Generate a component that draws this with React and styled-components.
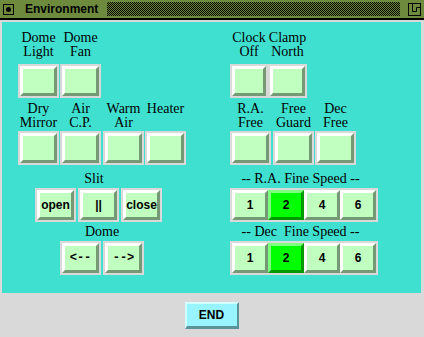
import React from 'react';
import styled, { createGlobalStyle } from 'styled-components';

const GlobalStyle = createGlobalStyle`
  html, body {
    margin: 0;
    padding: 0;
    background: #d9d9d9;
  }
  body {
    width: 424px;
    height: 337px;
    overflow: hidden;
  }
`;

const Window = styled.div`
  width: 424px;
  height: 337px;
  display: flex;
  flex-direction: column;
  background: #d9d9d9;
`;

const TitleBar = styled.div`
  height: 18px;
  background: #6e8b3d;
  border-bottom: 2px solid #000;
  display: flex;
  align-items: center;
  padding: 0 3px;
`;

const MenuBox = styled.div`
  box-sizing: border-box;
  width: 11px;
  height: 11px;
  border: 1px solid #000;
  display: flex;
  align-items: center;
  justify-content: center;
  &::after {
    content: '';
    width: 5px;
    height: 5px;
    border-radius: 50%;
    background: #000;
  }
`;

const TitleText = styled.div`
  width: 82px;
  margin-left: 11px;
  font: bold 12px "Liberation Sans", Arial, sans-serif;
  color: #000;
`;

const Hatch = styled.div`
  flex: 1;
  height: 14px;
  margin-right: 8px;
  background: repeating-conic-gradient(#000 0 25%, transparent 0 50%) 0 0 / 2px 2px;
`;

const Body = styled.div`
  flex: 1;
  display: flex;
  flex-direction: column;
  padding: 2px 3px 0 2px;
`;

const Panel = styled.div`
  height: 271px;
  box-sizing: border-box;
  background: #40e0d0;
  padding: 9px 0 0 16px;
  display: flex;
  flex-direction: column;
`;

const Band = styled.div`
  display: grid;
  grid-template-columns: 212px 1fr;
  align-items: start;
  justify-items: start;
  margin-top: ${p => p.$top || 0}px;
`;

const Row = styled.div`
  display: flex;
  align-items: flex-start;
  gap: ${p => p.$gap || 0}px;
  margin-left: ${p => p.$left || 0}px;
`;

const Cell = styled.div`
  display: flex;
  flex-direction: column;
  align-items: ${p => p.$align || 'center'};
  gap: ${p => p.$gap || 0}px;
  margin-left: ${p => p.$left || 0}px;
`;

const Label = styled.div`
  font: 14px/14px "Liberation Serif", "Times New Roman", serif;
  color: #000;
  text-align: center;
  white-space: pre;
  height: ${p => (p.$lines || 1) * 14}px;
  margin-right: ${p => p.$nudge || 0}px;
`;

const Frame = styled.div`
  display: flex;
  padding: 2px;
  background: #d9d9d9;
`;

const Btn = styled.div`
  box-sizing: border-box;
  width: ${p => p.$w}px;
  height: ${p => p.$h || 30}px;
  border: 3px solid;
  border-color: ${p => p.$on
    ? '#7fff7f #009900 #009900 #7fff7f'
    : '#ffffff #749974 #749974 #ffffff'};
  background: ${p => p.$on ? '#00ff00' : '#c1ffc1'};
  display: flex;
  align-items: center;
  justify-content: center;
  font: bold 12px "Liberation Sans", Arial, sans-serif;
  color: #000;
`;

const Mono = styled.span`
  font: bold 12px "Liberation Mono", "Courier New", monospace;
  white-space: pre;
`;

const Footer = styled.div`
  flex: 1;
  display: flex;
  justify-content: center;
  padding-top: 9px;
`;

const EndBtn = styled.div`
  box-sizing: border-box;
  width: 54px;
  height: 27px;
  border: 2px solid;
  border-color: #d4ffff #5b9399 #5b9399 #d4ffff;
  border-bottom-width: 3px;
  background: #98f5ff;
  display: flex;
  align-items: center;
  justify-content: center;
  font: bold 12px "Liberation Sans", Arial, sans-serif;
  color: #000;
`;

const Toggle = ({ label, w = 41, gap, left }) => (
  <Cell $gap={gap} $left={left} style={{ width: w }}>
    <Label $lines={2}>{label}</Label>
    <Frame>
      <Btn $w={w - 4} />
    </Frame>
  </Cell>
);

const Push = ({ children, w = 41 }) => (
  <Frame>
    <Btn $w={w - 4}>{children}</Btn>
  </Frame>
);

const Speed = ({ title, value, nudge }) => (
  <Cell $gap={2} $align="flex-start">
    <Label $nudge={nudge} style={{ width: 148 - nudge }}>{title}</Label>
    <Frame>
      {[1, 2, 4, 6].map(n => (
        <Btn key={n} $w={36} $on={n === value}>{n}</Btn>
      ))}
    </Frame>
  </Cell>
);

const ResizeIcon = () => (
  <svg width="13" height="13" viewBox="0 0 13 13">
    <rect x="0.5" y="0.5" width="12" height="12" fill="none" stroke="#000" />
    <path d="M4.5 1 V8.5 H8.5 V4.5 H12" fill="none" stroke="#000" />
  </svg>
);

export default function App() {
  return (
    <Window>
      <GlobalStyle />
      <TitleBar>
        <MenuBox />
        <TitleText>Environment</TitleText>
        <Hatch />
        <ResizeIcon />
      </TitleBar>
      <Body>
        <Panel>
          <Band>
            <Row $gap={1}>
              <Toggle label={'Dome\nLight'} gap={5} />
              <Toggle label={'Dome\nFan'} gap={5} />
            </Row>
            <Row>
              <Toggle label={'Clock\nOff'} w={38} gap={5} />
              <Toggle label={'Clamp\nNorth'} w={39} gap={5} />
            </Row>
          </Band>

          <Band $top={4}>
            <Row>
              <Toggle label={'Dry\nMirror'} gap={1} />
              <Toggle label={'Air\nC.P.'} left={1} gap={1} />
              <Toggle label={'Warm\nAir'} left={2} gap={1} />
              <Toggle label={'Heater'} left={1} gap={1} />
            </Row>
            <Row>
              <Toggle label={'R.A.\nFree'} gap={1} />
              <Toggle label={'Free\nGuard'} left={2} gap={1} />
              <Toggle label={'Dec\nFree'} left={1} gap={1} />
            </Row>
          </Band>

          <Band $top={7}>
            <Cell $gap={2} $left={17}>
              <Label $nudge={9}>Slit</Label>
              <Row $gap={2}>
                <Push>open</Push>
                <Push>||</Push>
                <Push>close</Push>
              </Row>
            </Cell>
            <Speed title="-- R.A. Fine Speed --" value={2} nudge={7} />
          </Band>

          <Band $top={3}>
            <Cell $gap={2} $left={42}>
              <Label>Dome</Label>
              <Row $gap={2}>
                <Push><Mono>{'<--'}</Mono></Push>
                <Push><Mono>{'-->'}</Mono></Push>
              </Row>
            </Cell>
            <Speed title="-- Dec  Fine Speed --" value={2} nudge={7} />
          </Band>
        </Panel>
        <Footer>
          <EndBtn>END</EndBtn>
        </Footer>
      </Body>
    </Window>
  );
}
